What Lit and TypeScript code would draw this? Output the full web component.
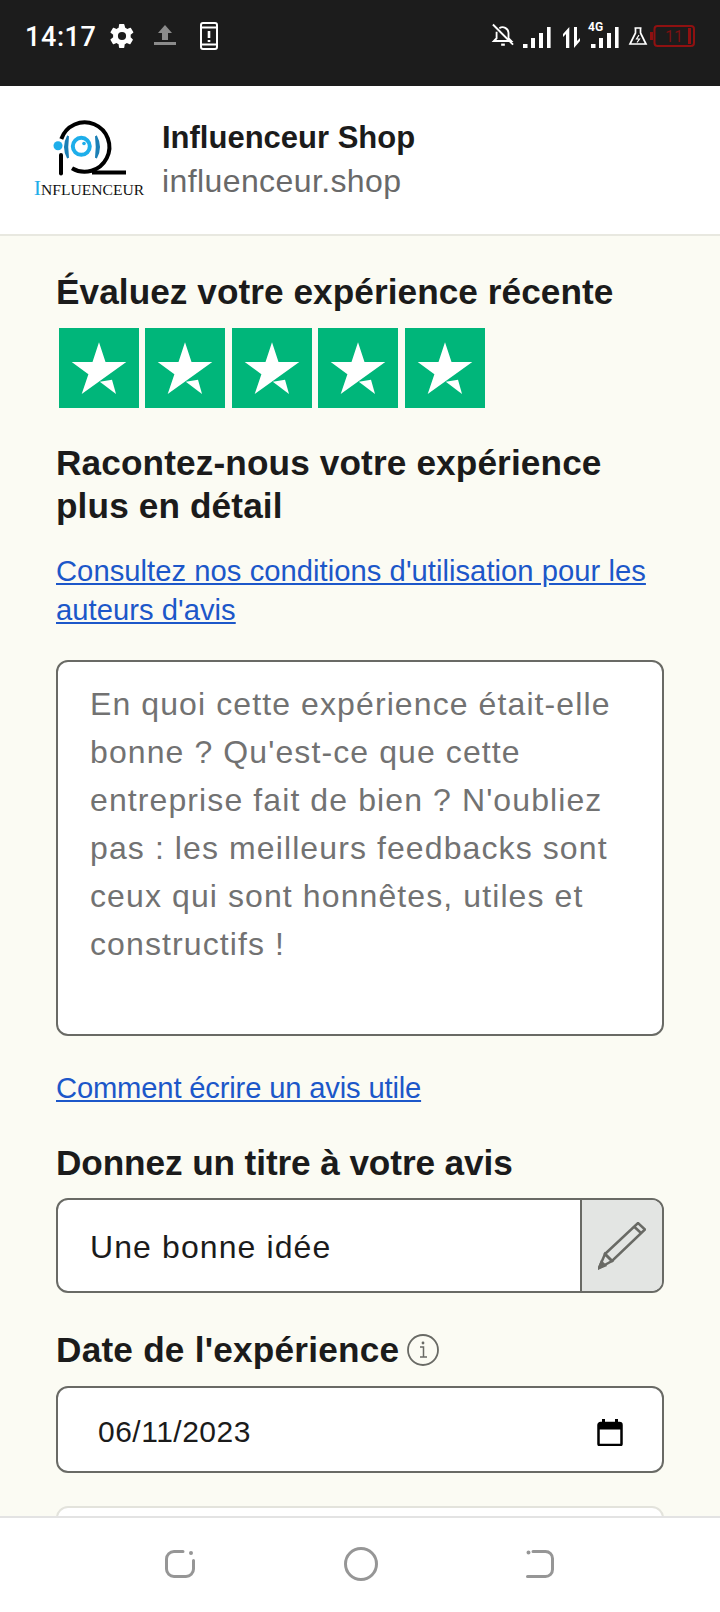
import { LitElement, css, html, svg } from "lit";
import { customElement } from "lit/decorators.js";

const star = svg`<path fill="#fff" d="M40 14.300l6.500 19.700h20.800L22.700 66l6.700-19.800L12.700 34h20.800z"/><path fill="#fff" d="M40.800 53.800L53 51.700 57 66z"/>`;

const bars = svg`<path d="M0 17h4.500v4H0zM8 11h4v10H8zM16 6h4v15h-4zM24 0h3.600v21H24z" />`;

@customElement("app-root")
export class AppRoot extends LitElement {
  static styles = css`
    :host {
      display: flex;
      flex-direction: column;
      width: 720px;
      height: 1612px;
      overflow: hidden;
      background: #fff;
      font-family: "Liberation Sans", Arial, sans-serif;
      color: #1b1b1b;
    }
    .status {
      flex: none;
      height: 86px;
      background: #1c1c1c;
      display: flex;
      align-items: flex-start;
      justify-content: space-between;
      padding: 22px 25px 0 25px;
      box-sizing: border-box;
      color: #fff;
    }
    .status-left {
      display: flex;
      align-items: center;
      height: 30px;
    }
    .status-right {
      display: flex;
      align-items: flex-end;
      height: 26px;
    }
    .time {
      font-family: Roboto, sans-serif;
      font-size: 27px;
      font-weight: 500;
      letter-spacing: 0.6px;
      margin-right: 11px;
    }
    .status svg {
      display: block;
      overflow: visible;
    }
    .header {
      flex: none;
      height: 150px;
      background: #fff;
      border-bottom: 2px solid #e8e8e0;
      box-sizing: border-box;
      display: flex;
      align-items: center;
      padding-left: 32px;
    }
    .logo {
      width: 114px;
      margin-right: 16px;
      margin-top: -4px;
      display: flex;
      flex-direction: column;
      align-items: center;
    }
    .logo svg {
      display: block;
    }
    .logo-text {
      font-family: "Liberation Serif", serif;
      font-size: 15.600px;
      line-height: 18px;
      color: #111;
      white-space: nowrap;
    }
    .logo-text b {
      font-weight: 400;
      font-size: 22px;
      color: #1eaeea;
    }
    .shop-name {
      font-size: 31px;
      font-weight: 700;
      line-height: 36px;
      margin-top: -1px;
    }
    .shop-url {
      font-size: 32px;
      line-height: 36px;
      color: #696969;
      margin-top: 7px;
      letter-spacing: 0.4px;
    }
    .content {
      flex: 1;
      min-height: 0;
      overflow: hidden;
      background: #fbfbf3;
      padding: 0 56px;
    }
    h2 {
      margin: 0;
      font-size: 35.200px;
      line-height: 43px;
      font-weight: 700;
    }
    .h-first {
      margin-top: 34px;
      letter-spacing: 0.06px;
    }
    .stars {
      display: flex;
      gap: 6.670px;
      margin: 15px 0 0 2.500px;
    }
    .stars svg {
      display: block;
      width: 80px;
      height: 80px;
    }
    .h-detail {
      margin-top: 33px;
      letter-spacing: 0.13px;
    }
    a {
      color: #1c57c9;
      text-decoration: underline;
      font-size: 29.200px;
      line-height: 39px;
      display: block;
    }
    .terms {
      margin-top: 25px;
      letter-spacing: 0.04px;
    }
    .box {
      box-sizing: border-box;
      width: 608px;
      border: 2px solid #696a65;
      border-radius: 12px;
      background: #fff;
    }
    .area {
      height: 376px;
      margin-top: 30px;
      padding: 18px 30px 0 32px;
      font-size: 32px;
      line-height: 48px;
      letter-spacing: 1.100px;
      color: #727272;
    }
    .advice {
      margin-top: 33px;
      letter-spacing: -0.17px;
    }
    .h-title {
      margin-top: 33px;
      letter-spacing: -0.1px;
    }
    .title-box {
      height: 95px;
      margin-top: 14px;
      display: flex;
      overflow: hidden;
    }
    .title-text {
      flex: 1;
      padding: 2px 0 0 32px;
      font-size: 32px;
      line-height: 91px;
      letter-spacing: 1.100px;
    }
    .pencil {
      width: 80px;
      background: #e3e5e3;
      border-left: 2px solid #696a65;
      display: flex;
      align-items: center;
      justify-content: center;
    }
    .h-date {
      margin-top: 35px;
      display: flex;
      align-items: center;
      gap: 8px;
      letter-spacing: 0.22px;
    }
    .date-box {
      height: 87px;
      margin-top: 15px;
      display: flex;
      align-items: center;
      justify-content: space-between;
      padding: 4px 39px 0 40px;
      font-size: 30px;
      letter-spacing: 0.500px;
    }
    .next {
      height: 60px;
      margin-top: 33px;
      border-color: #e3e3dc;
    }
    .nav {
      flex: none;
      height: 96px;
      background: #fff;
      border-top: 2px solid #e3e3e3;
      box-sizing: border-box;
      display: flex;
      align-items: flex-start;
      justify-content: space-between;
      padding: 32px 166px 0 165px;
    }
    .nav svg {
      display: block;
    }
  `;

  render() {
    return html`
      <div class="status">
        <div class="status-left">
          <span class="time">14:17</span>
          <svg width="28" height="28" viewBox="0 0 24 24" fill="#fff" style="margin:-2px 17px 0 0">
            <path d="M19.400 13c.04-.32.060-.66.060-1s-.02-.68-.070-1l2.150-1.680a.5.500 0 0 0 .120-.650l-2.040-3.530a.5.500 0 0 0-.620-.220l-2.540 1.020a7.500 7.500 0 0 0-1.720-1L14 2.240A.5.500 0 0 0 13.500 1.800h-3.500a.5.500 0 0 0-.5.440L9.100 4.940a7.800 7.800 0 0 0-1.720 1L4.840 4.920a.5.500 0 0 0-.620.220L2.180 8.670a.5.500 0 0 0 .120.650L4.450 11c-.05.320-.090.660-.090 1s.02.680.070 1l-2.150 1.680a.5.500 0 0 0-.120.650l2.040 3.530c.13.230.4.310.62.220l2.540-1.020c.53.400 1.100.740 1.720 1l.380 2.700c.05.250.26.440.5.440h3.500c.25 0 .46-.19.500-.44l.38-2.700a7.800 7.800 0 0 0 1.720-1l2.540 1.020c.23.090.49 0 .62-.22l2.040-3.530a.5.500 0 0 0-.120-.650zM12 15.500a3.500 3.500 0 1 1 0-7 3.500 3.500 0 0 1 0 7z" />
          </svg>
          <svg width="24" height="22" viewBox="0 0 24 22" fill="#8b8b8b" style="margin:-4px 22px 0 0">
            <path d="M12 1l7 8h-4v7H9V9H5zM1 18h22v3H1z" />
          </svg>
          <svg width="20" height="28" viewBox="0 0 20 28" fill="none" stroke="#fff" stroke-width="2" style="margin-top:-2px">
            <rect x="2" y="1" width="16" height="26" rx="2" />
            <path d="M2 5.500h16M2 22.500h16" />
            <path d="M10 9v7M10 18v2" stroke-width="2.600" />
          </svg>
        </div>
        <div class="status-right">
          <svg width="22" height="25" viewBox="0 0 24 26" fill="none" stroke="#fff" stroke-width="2" style="margin-right:9px">
            <path d="M5 19h16l-3-3v-6a6.500 6.500 0 0 0-10-5M5 9v7l-3 3h3" />
            <path d="M1 1l22 22" />
            <path d="M10 23h4" stroke-width="2.400" />
          </svg>
          <svg width="28" height="21" viewBox="0 0 28 21" fill="#fff" style="margin-right:12px">${bars}</svg>
          <svg width="17" height="21" viewBox="0 0 17 21" fill="#fff" style="margin-right:8px">
            <path d="M3 21V7L0 10V7l6.300-7v21zM11 0h3v14l3-3v3l-6 7z" />
          </svg>
          <svg width="31" height="26" viewBox="0 0 31 26" fill="#fff" style="margin-right:10px">
            <text x="0" y="9" font-family="Roboto, sans-serif" font-size="12" font-weight="700">4G</text>
            <g transform="translate(3 5)">${bars}</g>
          </svg>
          <svg width="18" height="18" viewBox="0 0 18 18" fill="none" stroke="#fff" stroke-width="1.700" style="margin:0 3px 3px 0">
            <path d="M5.500 1h7M6.500 1v5L1 17h16L11.500 6V1" />
            <path d="M10 8l-2.500 4h3l-2.500 3.500" stroke-width="1.200" />
          </svg>
          <svg width="45" height="22" viewBox="0 0 45 22" fill="none" style="margin-bottom:1px">
            <rect x="0" y="7" width="3" height="8" fill="#8f1111" />
            <rect x="4.500" y="1" width="39.500" height="20" rx="3" stroke="#8f1111" stroke-width="2" />
            <rect x="38" y="3" width="3" height="16" fill="#8f1111" />
            <text x="15" y="17" fill="#7a1010" font-family="Roboto, sans-serif" font-size="16">11</text>
          </svg>
        </div>
      </div>

      <div class="header">
        <div class="logo">
          <svg width="78" height="62" viewBox="0 0 78 62" fill="none">
            <path d="M11.300 22A24.700 24.700 0 1 1 22 51.200" stroke="#000" stroke-width="4" />
            <path d="M11 38v18.500" stroke="#000" stroke-width="4" stroke-linecap="round" />
            <path d="M42 55.500h34" stroke="#000" stroke-width="4" />
            <circle cx="31.300" cy="29.300" r="8.500" stroke="#1eaeea" stroke-width="4" />
            <circle cx="34" cy="26.500" r="1.800" fill="#1eaeea" />
            <path d="M18 19q-6 11 0 22q-1.500-11 0-22zM46 19q6 11 0 22q1.500-11 0-22z" fill="#1b7fb5" stroke="#1b7fb5" stroke-width="2" />
            <circle cx="8" cy="28.700" r="4.500" fill="#1eaeea" />
          </svg>
          <span class="logo-text"><b>I</b>NFLUENCEUR</span>
        </div>
        <div>
          <div class="shop-name">Influenceur Shop</div>
          <div class="shop-url">influenceur.shop</div>
        </div>
      </div>

      <div class="content">
        <h2 class="h-first">Évaluez votre expérience récente</h2>
        <div class="stars">
          ${[0, 1, 2, 3, 4].map(
            () => html`<svg viewBox="0 0 80 80"><rect width="80" height="80" fill="#00b67a" />${star}</svg>`
          )}
        </div>
        <h2 class="h-detail">Racontez-nous votre expérience<br />plus en détail</h2>
        <a class="terms" href="#">Consultez nos conditions d'utilisation pour les auteurs d'avis</a>
        <div class="box area">
          En quoi cette expérience était-elle bonne ? Qu'est-ce que cette entreprise fait de bien ? N'oubliez pas : les meilleurs
          feedbacks sont ceux qui sont honnêtes, utiles et constructifs !
        </div>
        <a class="advice" href="#">Comment écrire un avis utile</a>
        <h2 class="h-title">Donnez un titre à votre avis</h2>
        <div class="box title-box">
          <div class="title-text">Une bonne idée</div>
          <div class="pencil">
            <svg width="48" height="48" viewBox="0 0 48 48" fill="none" stroke="#696a65" stroke-width="2.500">
              <path d="M7 32L40 1l7 6.500L14 39z" />
              <path d="M36 4.500l7 6.500" />
              <path d="M1 46l6-14 7 7z" />
              <path d="M1 46l2.500-6 3.500 3.500z" fill="#696a65" />
            </svg>
          </div>
        </div>
        <h2 class="h-date">
          Date de l'expérience
          <svg width="32" height="32" viewBox="0 0 32 32" fill="none" stroke="#696a65" stroke-width="1.800">
            <circle cx="16" cy="16" r="15" />
            <path d="M13 13h3.500v10M13 23h7" stroke-width="1.500" />
            <circle cx="16" cy="9" r="1.400" fill="#696a65" stroke="none" />
          </svg>
        </h2>
        <div class="box date-box">
          <span>06/11/2023</span>
          <svg width="26" height="28" viewBox="0 0 26 28" fill="none">
            <path d="M1.500 7a2 2 0 0 1 2-2h19a2 2 0 0 1 2 2v19a1 1 0 0 1-1 1h-21a1 1 0 0 1-1-1z" stroke="#000" stroke-width="2.500" />
            <path d="M1.500 5h23v6.500h-23zM5 1h3v4H5zM18 1h3v4h-3z" fill="#000" />
          </svg>
        </div>
        <div class="box next"></div>
      </div>

      <div class="nav">
        <svg width="30" height="28" viewBox="0 0 30 28" fill="none" stroke="#969696" stroke-width="3" stroke-linecap="round">
          <path d="M18 1.500H9A7.500 7.500 0 0 0 1.500 9v10A7.500 7.500 0 0 0 9 26.500h12a7.500 7.500 0 0 0 7.500-7.500v-8.500" />
          <circle cx="26" cy="3" r="1" fill="#969696" stroke-width="2" />
        </svg>
        <svg width="34" height="34" viewBox="0 0 34 34" fill="none" stroke="#969696" stroke-width="3" style="margin-top:-3px">
          <circle cx="17" cy="17" r="15.500" />
        </svg>
        <svg width="28" height="28" viewBox="0 0 28 28" fill="none" stroke="#969696" stroke-width="3" stroke-linecap="round">
          <path d="M7 1.500h12.500A7 7 0 0 1 26.500 8.500v11a7 7 0 0 1-7 7H1.500" />
          <circle cx="2.500" cy="2.500" r="1" fill="#969696" stroke-width="2" />
        </svg>
      </div>
    `;
  }
}
